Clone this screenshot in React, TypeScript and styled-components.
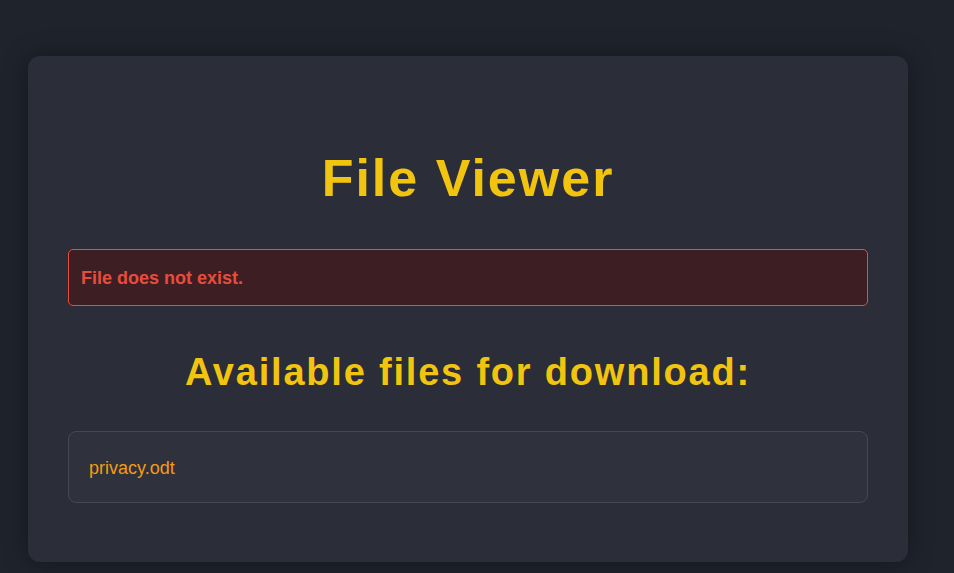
import styled, { createGlobalStyle } from "styled-components";

const GlobalStyle = createGlobalStyle`
  html, body {
    margin: 0;
    padding: 0;
    background: #1f232c;
  }
  body {
    font-family: "Liberation Sans", Arial, sans-serif;
  }
`;

const Page = styled.div`
  display: flex;
  align-items: flex-start;
  padding: 56px 0 12px 28px;
  min-height: 573px;
  box-sizing: border-box;
`;

const Card = styled.main`
  width: 880px;
  box-sizing: border-box;
  padding: 91px 40px 59px;
  background: #2b2d38;
  border-radius: 12px;
  box-shadow: 0 0 24px rgba(0, 0, 0, 0.35);
`;

const Title = styled.h1`
  margin: 0 0 40px;
  color: #f1c40f;
  font-size: 52px;
  line-height: 62px;
  font-weight: 700;
  letter-spacing: 2px;
  text-align: center;
`;

const Alert = styled.div`
  padding: 18px 12px 16px;
  border: 1px solid #e74c3c;
  border-radius: 5px;
  background: #3d1f23;
  color: #e74c3c;
  font-size: 18px;
  font-weight: 700;
`;

const SubTitle = styled.h2`
  margin: 43px 0 36px;
  color: #f1c40f;
  font-size: 38px;
  line-height: 46px;
  font-weight: 700;
  letter-spacing: 1.8px;
  text-align: center;
`;

const FileList = styled.ul`
  list-style: none;
  margin: 0;
  padding: 0;
  display: flex;
  flex-direction: column;
  gap: 12px;
`;

const FileItem = styled.li`
  padding: 26px 20px 23px;
  border: 1px solid #444852;
  border-radius: 8px;
  background: #2f323d;
  color: #f39c12;
  font-size: 18px;
`;

const files = ["privacy.odt"];

export default function App() {
  return (
    <>
      <GlobalStyle />
      <Page>
        <Card>
          <Title>File Viewer</Title>
          <Alert>File does not exist.</Alert>
          <SubTitle>Available files for download:</SubTitle>
          <FileList>
            {files.map((name) => (
              <FileItem key={name}>{name}</FileItem>
            ))}
          </FileList>
        </Card>
      </Page>
    </>
  );
}
